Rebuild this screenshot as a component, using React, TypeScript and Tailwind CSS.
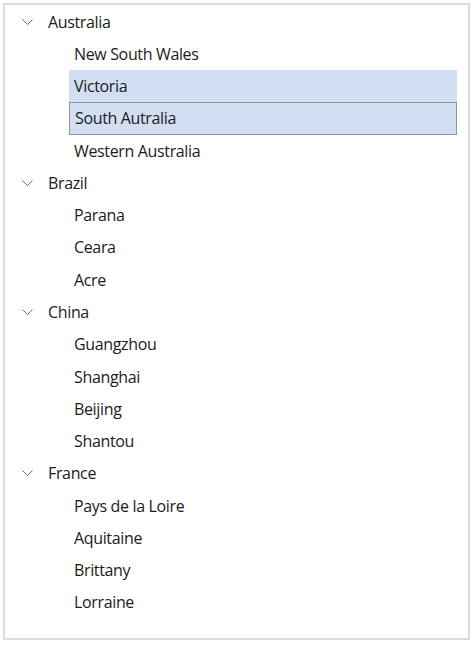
import React from 'react';

interface Group {
  name: string;
  items: string[];
}

const groups: Group[] = [
  { name: 'Australia', items: ['New South Wales', 'Victoria', 'South Autralia', 'Western Australia'] },
  { name: 'Brazil', items: ['Parana', 'Ceara', 'Acre'] },
  { name: 'China', items: ['Guangzhou', 'Shanghai', 'Beijing', 'Shantou'] },
  { name: 'France', items: ['Pays de la Loire', 'Aquitaine', 'Brittany', 'Lorraine'] },
];

const Chevron = () => (
  <svg width="11" height="6" viewBox="0 0 11 6" fill="none" className="shrink-0">
    <path d="M0.5 0.5 L5.5 5.5 L10.5 0.5" stroke="#707070" strokeWidth="1" />
  </svg>
);

const App: React.FC = () => {
  const selected = ['Victoria', 'South Autralia'];
  const focused = 'South Autralia';

  return (
    <div className="w-[474px] h-[645px] bg-white font-['Open_Sans','Noto_Sans',sans-serif] text-[16px] text-[#1b1b1b]">
      <div className="ml-[3px] mt-[3px] w-[467px] h-[637px] border-2 border-[#dcdcdc] pt-[0.5px]">
        {groups.map((g) => (
          <div key={g.name}>
            <div className="h-[32.28px] flex items-center">
              <div className="w-[17px]" />
              <Chevron />
              <span className="ml-[15px] tracking-[-0.35px]">{g.name}</span>
            </div>
            {g.items.map((item) => {
              const isSel = selected.includes(item);
              const isFocus = item === focused;
              let cls = 'h-[32.28px] ml-[64px] w-[388px] flex items-center pl-[5px] tracking-[-0.35px] ';
              if (isSel) cls += 'bg-[#d2dff2] ';
              if (isFocus) cls += 'border border-[#8e969f] pl-[4px]';
              return (
                <div key={item} className={cls}>
                  {item}
                </div>
              );
            })}
          </div>
        ))}
      </div>
    </div>
  );
};

export default App;
